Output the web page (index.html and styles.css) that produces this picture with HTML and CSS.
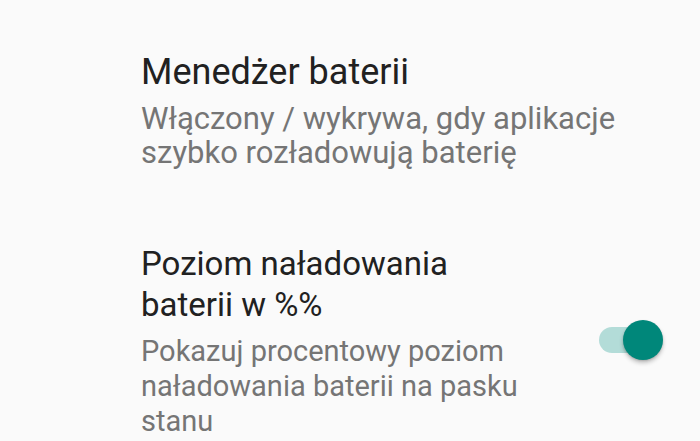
FILE: index.html
```html
<!DOCTYPE html>
<html lang="pl">
<head>
<meta charset="utf-8">
<title>Bateria</title>
<link rel="stylesheet" href="styles.css">
</head>
<body>
<ul class="prefs">
  <li class="pref pref--large">
    <div class="pref-text">
      <div class="pref-title">Menedżer baterii</div>
      <div class="pref-summary">Włączony / wykrywa, gdy aplikacje szybko rozładowują baterię</div>
    </div>
  </li>
  <li class="pref">
    <div class="pref-text">
      <div class="pref-title">Poziom naładowania baterii w %%</div>
      <div class="pref-summary">Pokazuj procentowy poziom naładowania baterii na pasku stanu</div>
    </div>
    <div class="switch is-on" role="switch" aria-checked="true">
      <span class="switch-track"></span>
      <span class="switch-thumb"></span>
    </div>
  </li>
</ul>
</body>
</html>
```
FILE: styles.css
```css
html, body {
  margin: 0;
  background: #fafafa;
}

body {
  font-family: Roboto, "Noto Sans", sans-serif;
  padding-top: 16px;
  overflow: hidden;
}

.prefs {
  list-style: none;
  margin: 0;
  padding: 0;
}

.pref {
  display: flex;
  align-items: center;
  gap: 58px;
  padding: 36px 37px 37px 141px;
}

.pref-text {
  flex: 1;
  min-width: 0;
}

.pref-title {
  font-size: 33px;
  line-height: 41px;
  color: #212121;
}

.pref-summary {
  margin-top: 9px;
  font-size: 29px;
  line-height: 35px;
  color: #757575;
}

/* first entry is set a touch larger */
.pref--large .pref-title {
  font-size: 36px;
}

.pref--large .pref-summary {
  font-size: 31px;
  line-height: 34px;
}

/* Material switch, checked state */
.switch {
  position: relative;
  flex: none;
  width: 64px;
  height: 40px;
  margin-top: -2px;
}

.switch-track {
  position: absolute;
  left: 0;
  top: 7px;
  width: 57px;
  height: 26px;
  border-radius: 13px;
  background: #b3dcd8;
}

.switch-thumb {
  position: absolute;
  right: 0;
  top: 0;
  width: 40px;
  height: 40px;
  border-radius: 50%;
  background: #00877a;
  box-shadow: 0 3px 4px rgba(0, 0, 0, 0.22), 0 1px 2px rgba(0, 0, 0, 0.14);
}
```
